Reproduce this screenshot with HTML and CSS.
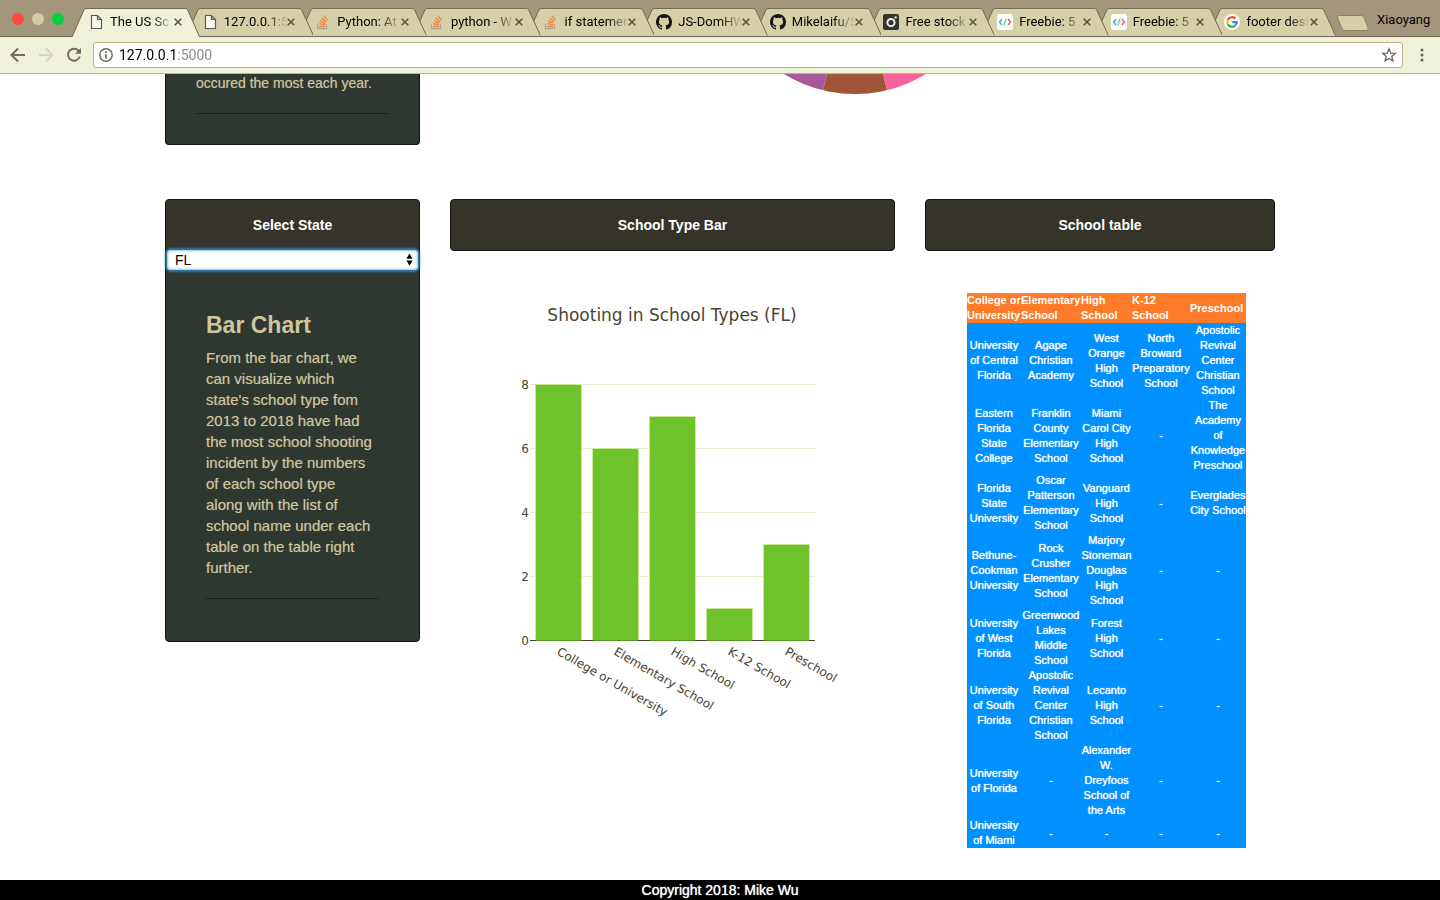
FILE: index.html
```html
<!DOCTYPE html>
<html lang="en">
<head>
<meta charset="utf-8">
<title>The US School Shootings</title>
<link rel="stylesheet" href="styles.css">
</head>
<body>
<svg class="defs" aria-hidden="true">
  <symbol id="tab-shape" viewBox="0 0 128 29" preserveAspectRatio="none">
    <path d="M0 29 L12 2 Q13 .5 15 .5 H113 Q115 .5 116 2 L128 29" stroke="#716a52" vector-effect="non-scaling-stroke"/>
  </symbol>
  <symbol id="doc" viewBox="0 0 16 16"><path d="M3.5 1.5h6l4 4v9h-10zM9.5 1.5v4h4" fill="#f7f7ee" stroke="#5c5b4e" stroke-width="1.2"/></symbol>
  <symbol id="close" viewBox="0 0 8 8"><path d="M.7.7l6.6 6.6M7.3.7L.7 7.3" stroke="#55523f" stroke-width="1.5"/></symbol>
  <symbol id="so" viewBox="0 0 16 16"><g fill="none"><path d="M2.5 10v4.5h9V10" stroke="#a6a6a0" stroke-width="1.3"/><path d="M4.2 12.3h5.7M4.3 9.6l5.7 1.1M5 6.8l5.3 2.4M6.6 4.1l4.5 3.6M9 1.8l3.4 4.6" stroke="#ef8236" stroke-width="1.3"/></g></symbol>
  <symbol id="gh" viewBox="0 0 16 16"><path fill="#171515" d="M8 0C3.58 0 0 3.58 0 8c0 3.54 2.29 6.53 5.47 7.59.4.07.55-.17.55-.38 0-.19-.01-.82-.01-1.49-2.01.37-2.53-.49-2.69-.94-.09-.23-.48-.94-.82-1.13-.28-.15-.68-.52-.01-.53.63-.01 1.08.58 1.23.82.72 1.21 1.87.87 2.33.66.07-.52.28-.87.51-1.07-1.78-.2-3.64-.89-3.64-3.95 0-.87.31-1.59.82-2.15-.08-.2-.36-1.02.08-2.12 0 0 .67-.21 2.2.82a7.6 7.6 0 014 0c1.53-1.04 2.2-.82 2.2-.82.44 1.1.16 1.92.08 2.12.51.56.82 1.27.82 2.15 0 3.07-1.87 3.75-3.65 3.95.29.25.54.73.54 1.48 0 1.07-.01 1.93-.01 2.2 0 .21.15.46.55.38A8.01 8.01 0 0016 8c0-4.42-3.58-8-8-8z"/></symbol>
  <symbol id="cam" viewBox="0 0 16 16"><rect width="16" height="16" rx="2" fill="#333"/><circle cx="8" cy="8.6" r="3.6" fill="none" stroke="#f0eee0" stroke-width="2"/><circle cx="12.6" cy="3.4" r="1.2" fill="#f0eee0"/></symbol>
  <symbol id="code" viewBox="0 0 16 16"><rect width="16" height="16" rx="3" fill="#fff"/><g fill="none" stroke-width="1.5"><path d="M5 5L2.5 8 5 11" stroke="#34b3e4"/><path d="M9.2 4.5L6.8 11.5" stroke="#7bd094"/><path d="M11 5l2.5 3L11 11" stroke="#f4605f"/></g></symbol>
  <symbol id="goog" viewBox="0 0 16 16"><circle cx="8" cy="8" r="8" fill="#fff"/><g fill="none" stroke-width="2.2"><path d="M11.4 4.6A4.8 4.8 0 0 0 3.8 5.7" stroke="#ea4335"/><path d="M3.8 5.7a4.8 4.8 0 0 0 0 4.6" stroke="#fbbc05"/><path d="M3.8 10.3a4.8 4.8 0 0 0 7.4 1.2" stroke="#34a853"/><path d="M11.2 11.5A4.6 4.6 0 0 0 12.8 8.1H8.2" stroke="#4285f4"/></g></symbol>
</svg>

<header class="browser">
  <div class="tabstrip">
    <div class="lights"><i class="red"></i><i class="idle"></i><i class="green"></i></div>
    <div class="tabs">
      <div class="tab active"><svg class="shape"><use href="#tab-shape"/></svg><svg class="fav"><use href="#doc"/></svg><span class="title">The US Sc</span><button class="x" aria-label="Close tab"><svg><use href="#close"/></svg></button></div>
      <div class="tab"><svg class="shape"><use href="#tab-shape"/></svg><svg class="fav"><use href="#doc"/></svg><span class="title">127.0.0.1:5</span><button class="x" aria-label="Close tab"><svg><use href="#close"/></svg></button></div>
      <div class="tab"><svg class="shape"><use href="#tab-shape"/></svg><svg class="fav"><use href="#so"/></svg><span class="title">Python: At</span><button class="x" aria-label="Close tab"><svg><use href="#close"/></svg></button></div>
      <div class="tab"><svg class="shape"><use href="#tab-shape"/></svg><svg class="fav"><use href="#so"/></svg><span class="title">python - W</span><button class="x" aria-label="Close tab"><svg><use href="#close"/></svg></button></div>
      <div class="tab"><svg class="shape"><use href="#tab-shape"/></svg><svg class="fav"><use href="#so"/></svg><span class="title">if statemer</span><button class="x" aria-label="Close tab"><svg><use href="#close"/></svg></button></div>
      <div class="tab"><svg class="shape"><use href="#tab-shape"/></svg><svg class="fav"><use href="#gh"/></svg><span class="title">JS-DomHW</span><button class="x" aria-label="Close tab"><svg><use href="#close"/></svg></button></div>
      <div class="tab"><svg class="shape"><use href="#tab-shape"/></svg><svg class="fav"><use href="#gh"/></svg><span class="title">Mikelaifu/S</span><button class="x" aria-label="Close tab"><svg><use href="#close"/></svg></button></div>
      <div class="tab"><svg class="shape"><use href="#tab-shape"/></svg><svg class="fav"><use href="#cam"/></svg><span class="title">Free stock</span><button class="x" aria-label="Close tab"><svg><use href="#close"/></svg></button></div>
      <div class="tab"><svg class="shape"><use href="#tab-shape"/></svg><svg class="fav"><use href="#code"/></svg><span class="title">Freebie: 5</span><button class="x" aria-label="Close tab"><svg><use href="#close"/></svg></button></div>
      <div class="tab"><svg class="shape"><use href="#tab-shape"/></svg><svg class="fav"><use href="#code"/></svg><span class="title">Freebie: 5</span><button class="x" aria-label="Close tab"><svg><use href="#close"/></svg></button></div>
      <div class="tab"><svg class="shape"><use href="#tab-shape"/></svg><svg class="fav"><use href="#goog"/></svg><span class="title">footer desi</span><button class="x" aria-label="Close tab"><svg><use href="#close"/></svg></button></div>
    </div>
    <button class="newtab" aria-label="New tab"><svg viewBox="0 0 34 18"><path d="M3 1.5h22q2 0 3 2l4 10q1 3-2 3H9q-2 0-3-2L1.500 4q-1-2.500 1.500-2.500z" fill="#d6d0a9" stroke="#8a8266"/></svg></button>
    <span class="profile">Xiaoyang</span>
  </div>
  <div class="toolbar">
    <button class="nav" aria-label="Back"><svg viewBox="0 0 16 16"><path d="M15 8H2M8 1.500L1.500 8 8 14.500" fill="none" stroke="#716f5b" stroke-width="2"/></svg></button>
    <button class="nav" aria-label="Forward" disabled><svg viewBox="0 0 16 16"><path d="M1 8h13M8 1.500L14.500 8 8 14.500" fill="none" stroke="#d5d6bd" stroke-width="2"/></svg></button>
    <button class="nav" aria-label="Reload"><svg viewBox="0 0 16 16"><path d="M13 4.300A6 6 0 1 0 13.800 9.500" fill="none" stroke="#716f5b" stroke-width="2"/><path d="M15 .8v6H9z" fill="#716f5b"/></svg></button>
    <div class="address">
      <svg viewBox="0 0 14 14"><circle cx="7" cy="7" r="6.200" fill="none" stroke="#66645a" stroke-width="1.400"/><path d="M7 6.200v4.300M7 3.300v1.700" stroke="#66645a" stroke-width="1.700"/></svg>
      <input class="url" type="text" value="127.0.0.1:5000" aria-label="Address">
      <button class="star" aria-label="Bookmark"><svg viewBox="0 0 16 16"><path d="M8 1.800l1.700 4.300 4.600.3-3.500 3 1.100 4.500L8 11.400l-3.900 2.500 1.100-4.500-3.500-3 4.600-.3z" fill="none" stroke="#66645a" stroke-width="1.300"/></svg></button>
    </div>
    <button class="menu" aria-label="Menu"><svg viewBox="0 0 4 14"><g fill="#66645a"><circle cx="2" cy="2" r="1.500"/><circle cx="2" cy="7" r="1.500"/><circle cx="2" cy="12" r="1.500"/></g></svg></button>
  </div>
</header>

<main class="page">
  <section class="row">
    <div class="card tail">
      <p>occured the most each year.</p>
      <hr>
    </div>
    <svg class="pie" viewBox="784 74 142 20" role="img" aria-label="Pie chart">
      <clipPath id="disc"><circle cx="855" cy="-42" r="136"/></clipPath>
      <g clip-path="url(#disc)">
        <path d="M855-42L780 70V100H820.600z" fill="#a8589b"/>
        <path d="M855-42L820.600 100H889.400z" fill="#a0553b"/>
        <path d="M855-42L889.400 100H930V70z" fill="#f5629c"/>
      </g>
    </svg>
  </section>

  <section class="row states">
    <div class="card">
      <h4 class="head"><label for="state">Select State</label></h4>
      <div class="picker">
        <select id="state"><option>FL</option></select>
        <svg viewBox="0 0 8 14"><path d="M4 0l3.500 6h-7zM4 14L.5 8h7z"/></svg>
      </div>
      <div class="text">
        <h3>Bar Chart</h3>
        <p>From the bar chart, we<br>can visualize which<br>state's school type fom<br>2013 to 2018 have had<br>the most school shooting<br>incident by the numbers<br>of each school type<br>along with the list of<br>school name under each<br>table on the table right<br>further.</p>
        <hr>
      </div>
    </div>

    <div class="column">
      <h4 class="head box">School Type Bar</h4>
      <svg class="chart" viewBox="450 251 445 480">
        <text class="chart-title" x="672" y="321" text-anchor="middle">Shooting in School Types (FL)</text>
        <path d="M530 384.500H815M530 448.500H815M530 512.500H815M530 576.500H815" fill="none" stroke="#e9edc9"/>
        <path d="M530 640.500H815" stroke="#4a4236"/>
        <g fill="#71c32b" stroke="#cfe798">
          <path d="M535.500 640V384.500h46V640M592.500 640V448.500h46V640M649.500 640V416.500h46V640M706.500 640V608.500h46V640M763.500 640V544.500h46V640"/>
        </g>
        <path d="M536 640.500h45M593 640.500h45M650 640.500h45M707 640.500h45M764 640.500h45" stroke="#4f9a1c"/>
        <g class="ticks" text-anchor="end">
          <text x="529" y="389">8</text><text x="529" y="453">6</text><text x="529" y="517">4</text><text x="529" y="581">2</text><text x="529" y="645">0</text>
        </g>
        <g class="ticks">
          <text transform="translate(556 654) rotate(30)">College or University</text>
          <text transform="translate(613 654) rotate(30)">Elementary School</text>
          <text transform="translate(670 654) rotate(30)">High School</text>
          <text transform="translate(727 654) rotate(30)">K-12 School</text>
          <text transform="translate(784 654) rotate(30)">Preschool</text>
        </g>
      </svg>
    </div>

    <div class="column">
      <h4 class="head box">School table</h4>
      <table class="schools">
        <colgroup><col class="c1"><col class="c2"><col class="c3"><col class="c4"><col class="c5"></colgroup>
        <thead><tr><th>College or<br>University</th><th>Elementary<br>School</th><th>High<br>School</th><th>K-12<br>School</th><th>Preschool</th></tr></thead>
        <tbody>
          <tr><td>University<br>of Central<br>Florida</td><td>Agape<br>Christian<br>Academy</td><td>West<br>Orange<br>High<br>School</td><td>North<br>Broward<br>Preparatory<br>School</td><td>Apostolic<br>Revival<br>Center<br>Christian<br>School</td></tr>
          <tr><td>Eastern<br>Florida<br>State<br>College</td><td>Franklin<br>County<br>Elementary<br>School</td><td>Miami<br>Carol City<br>High<br>School</td><td>-</td><td>The<br>Academy<br>of<br>Knowledge<br>Preschool</td></tr>
          <tr><td>Florida<br>State<br>University</td><td>Oscar<br>Patterson<br>Elementary<br>School</td><td>Vanguard<br>High<br>School</td><td>-</td><td>Everglades<br>City School</td></tr>
          <tr><td>Bethune-<br>Cookman<br>University</td><td>Rock<br>Crusher<br>Elementary<br>School</td><td>Marjory<br>Stoneman<br>Douglas<br>High<br>School</td><td>-</td><td>-</td></tr>
          <tr><td>University<br>of West<br>Florida</td><td>Greenwood<br>Lakes<br>Middle<br>School</td><td>Forest<br>High<br>School</td><td>-</td><td>-</td></tr>
          <tr><td>University<br>of South<br>Florida</td><td>Apostolic<br>Revival<br>Center<br>Christian<br>School</td><td>Lecanto<br>High<br>School</td><td>-</td><td>-</td></tr>
          <tr><td>University<br>of Florida</td><td>-</td><td>Alexander<br>W.<br>Dreyfoos<br>School of<br>the Arts</td><td>-</td><td>-</td></tr>
          <tr><td>University<br>of Miami</td><td>-</td><td>-</td><td>-</td><td>-</td></tr>
        </tbody>
      </table>
    </div>
  </section>
</main>
<footer class="footer">Copyright 2018: Mike Wu</footer>
</body>
</html>
```
FILE: styles.css
```css
* { box-sizing: border-box; }
body {
  margin: 0;
  min-height: 100vh;
  display: flex;
  flex-direction: column;
  background: #fff;
  font: 15px/21px "Liberation Sans", Arial, sans-serif;
}
h3, h4, p { margin: 0; }
button { border: 0; padding: 0; background: none; display: flex; }
.defs { position: absolute; width: 0; height: 0; }

/* Browser bar */
.browser { font: 13px/16px Roboto, sans-serif; color: #000; }
.tabstrip {
  display: flex;
  align-items: flex-end;
  height: 37px;
  background: #a2977a;
  border-bottom: 1px solid #716a52;
}
.lights { display: flex; gap: 8px; width: 72px; padding: 0 0 11px 12px; flex: none; }
.lights i { width: 12px; height: 12px; border-radius: 50%; }
.red { background: #ff4a3d; }
.idle { background: #d3cba6; }
.green { background: #00d338; }
.tabs { display: flex; flex: 1; min-width: 0; isolation: isolate; padding-right: 14px; }
.tab {
  position: relative;
  flex: 1 1 0;
  min-width: 0;
  height: 28px;
  margin-right: -14px;
  padding: 0 18px 0 16px;
  display: flex;
  align-items: center;
}
.tab:nth-child(1) { z-index: 11; }
.tab:nth-child(2) { z-index: 10; }
.tab:nth-child(3) { z-index: 9; }
.tab:nth-child(4) { z-index: 8; }
.tab:nth-child(5) { z-index: 7; }
.tab:nth-child(6) { z-index: 6; }
.tab:nth-child(7) { z-index: 5; }
.tab:nth-child(8) { z-index: 4; }
.tab:nth-child(9) { z-index: 3; }
.tab:nth-child(10) { z-index: 2; }
.tab:nth-child(11) { z-index: 1; }
.shape { position: absolute; inset: 0; width: 100%; height: 28px; fill: #d6d0a9; }
.active .shape { fill: #eff1d8; height: 29px; }
.fav { position: relative; width: 16px; height: 16px; flex: none; }
.title {
  position: relative;
  flex: 1;
  min-width: 0;
  margin: 0 0 0 6px;
  white-space: nowrap;
  -webkit-mask-image: linear-gradient(90deg, #000 42px, transparent 64px);
  mask-image: linear-gradient(90deg, #000 42px, transparent 64px);
}
.x { position: relative; flex: none; }
.x svg { width: 8px; height: 8px; }
.newtab { flex: none; padding: 0 0 4px; }
.newtab svg { width: 34px; height: 18px; }
.profile { flex: none; width: 70px; padding: 0 0 8px 7px; }
.toolbar {
  display: flex;
  align-items: center;
  height: 37px;
  padding: 0 16px 0 10px;
  background: #eff1d8;
  border-bottom: 1px solid #bbb58f;
}
.nav { width: 28px; }
.nav svg { width: 16px; height: 16px; }
.address {
  display: flex;
  align-items: center;
  flex: 1;
  height: 26px;
  margin: 0 17px 0 -1px;
  padding: 0 5px;
  background: #fff;
  border: 1px solid #bdb58c;
  border-radius: 3px;
}
.address > svg { width: 14px; height: 14px; flex: none; }
.url {
  flex: 1;
  min-width: 0;
  height: 24px;
  border: 0;
  outline: 0;
  padding: 0 0 0 6px;
  font: 14px/20px Roboto, sans-serif;
  color: transparent;
  background: linear-gradient(90deg, #000 64px, #888 64px);
  -webkit-background-clip: text;
  background-clip: text;
}
.star svg { width: 16px; height: 16px; }
.menu svg { width: 4px; height: 14px; }

/* Page */
.page { flex: 1; padding: 0 15px; }
.row {
  display: grid;
  grid-template-columns: 255fr 445fr 350fr;
  gap: 30px;
  max-width: 1110px;
  margin: 0 auto;
  align-items: start;
}
.states { margin-top: 54px; }
.card {
  border: 1px solid #10140f;
  border-radius: 4px;
  background: #2f3731;
  color: #cdc69d;
}
.tail {
  border-top: 0;
  border-radius: 0 0 4px 4px;
  padding: 0 30px 30px;
  font-size: 14px;
  line-height: 19px;
}
hr { margin: 20px 0 0; border: 0; border-top: 1px solid #19221f; }
.pie { grid-column: 2 / 4; width: 142px; height: 20px; margin-left: 334px; }
.head {
  padding: 15px 15px 14px;
  background: #35332a;
  border-radius: 3px 3px 0 0;
  color: #fff;
  font-size: 14px;
  line-height: 20px;
  text-align: center;
}
.box { padding-bottom: 15px; border: 1px solid #10140f; border-radius: 4px; }
.picker { position: relative; padding: 1px; }
.picker select {
  display: block;
  appearance: none;
  width: 100%;
  height: 20px;
  padding: 0 8px;
  border: 0;
  border-radius: 4px;
  outline: 0;
  background: #fff;
  color: #000;
  font: 14px/20px "Liberation Sans", Arial, sans-serif;
  box-shadow: inset 0 0 2px 1px #8cc0ea, 0 0 2px 2px #2e7ba3;
}
.picker svg { position: absolute; right: 6px; top: 4px; width: 7px; height: 13px; }
.text { padding: 42px 40px; }
.text h3 { margin-bottom: 9px; font-size: 23px; line-height: 25px; }
.text p { white-space: nowrap; }
.text p, .tail p { text-shadow: 0 0 1px #cdc69d80; }
.chart { display: block; width: 100%; font-family: "DejaVu Sans", Verdana, sans-serif; fill: #4a4434; }
.chart-title { font-size: 17px; }
.ticks { font-size: 12px; }

.schools {
  table-layout: fixed;
  border-collapse: collapse;
  width: 279px;
  margin: 42px 0 32px 42px;
  background: #0091ff;
  color: #fff;
  font-size: 11px;
  line-height: 15px;
  white-space: nowrap;
}
.schools th { padding: 0; background: #ff7b29; text-align: left; }
.schools td { padding: 0; text-align: center; text-shadow: 0 0 1px #fff; }
.c1 { width: 54px; }
.c2 { width: 60px; }
.c3 { width: 51px; }
.c4 { width: 58px; }
.c5 { width: 56px; }
.footer {
  background: #000;
  color: #fff;
  font-size: 14px;
  line-height: 20px;
  text-align: center;
  text-shadow: 0 0 1px #fff;
}
```
